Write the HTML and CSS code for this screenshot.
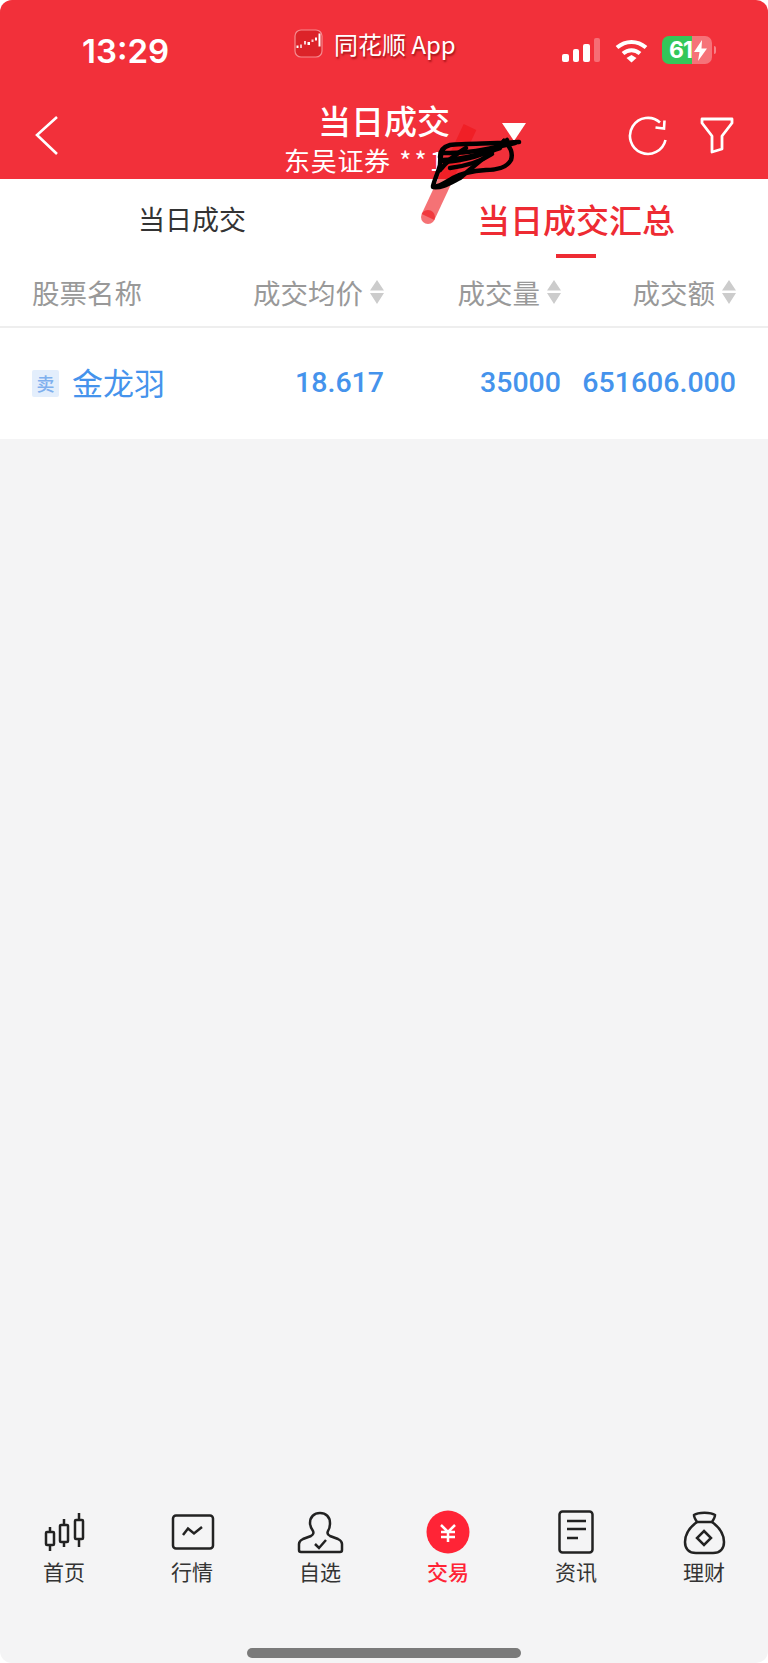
FILE: index.html
```html
<!DOCTYPE html>
<html lang="zh-CN">
<head>
  <meta charset="UTF-8" />
  <meta name="viewport" content="width=device-width, initial-scale=1.0" />
  <title>当日成交</title>
  <link rel="stylesheet" href="styles.css">
</head>
<body>
  <div class="screen">

    <!-- Red header -->
    <header class="top">
      <div class="status">
        <div class="time">13:29</div>
        <div class="app-label">
          <svg class="app-logo" viewBox="0 0 29 29">
            <rect x="1" y="1" width="27" height="27" rx="6" fill="#dc2329" stroke="#f58a8e" stroke-width="1.2"/>
            <g fill="#fff">
              <rect x="2.5" y="16.5" width="2" height="2.5"/>
              <rect x="6" y="15.5" width="2" height="3.5" opacity=".7"/>
              <rect x="10" y="12" width="2" height="3.5" opacity=".8"/>
              <rect x="13.5" y="13" width="2.5" height="3"/>
              <rect x="17.5" y="10.5" width="2" height="2.5" opacity=".8"/>
              <rect x="21" y="8.5" width="2" height="3"/>
              <rect x="24.5" y="4.5" width="2" height="13"/>
            </g>
          </svg>
          <span>同花顺 App</span>
        </div>
        <div class="indicators">
          <div class="signal">
            <i class="bar1"></i><i class="bar2"></i><i class="bar3"></i><i class="bar4"></i>
          </div>
          <svg class="wifi" viewBox="0 0 33 25" fill="none" stroke="#fff" stroke-width="4">
            <path d="M2 9.5C10.500 2 22.500 2 31 9.500"/>
            <path d="M8 15.500C13 11 20 11 25 15.500"/>
            <path d="M11.500 20L16.500 17L21.500 20L16.500 24.500Z" fill="#fff" stroke="none"/>
          </svg>
          <div class="battery">
            <span>61</span>
            <svg class="bolt" viewBox="0 0 13 21"><path d="M8 0L0 12H5.500L4 21L13 8.500H7.500Z" fill="#fff"/></svg>
          </div>
        </div>
      </div>

      <div class="nav">
        <svg class="back" viewBox="0 0 24 40" fill="none" stroke="#fff" stroke-width="2.6">
          <path d="M22 2L2 20L22 39"/>
        </svg>
        <div class="nav-title">
          <div class="title">当日成交</div>
          <div class="account">东吴证券 <em>**</em>1</div>
        </div>
        <div class="nav-actions">
          <svg class="refresh" viewBox="0 0 40 40" fill="none" stroke="#fff" stroke-width="2.6">
            <path d="M32 6.500A18 18 0 1 0 37.500 24"/>
            <path d="M36.500 4.500L36 12.500L27.500 11.500"/>
          </svg>
          <svg class="filter" viewBox="0 0 34 38" fill="none" stroke="#fff" stroke-width="2.8" stroke-linejoin="round">
            <path d="M2 3H32V7L22 20V33L12 36V20L2 7Z"/>
          </svg>
        </div>
      </div>
    </header>

    <!-- Tabs -->
    <div class="tabs">
      <div class="tab">当日成交</div>
      <div class="tab active">当日成交汇总</div>
    </div>

    <!-- Table -->
    <div class="table-head">
      <div class="th-name">股票名称</div>
      <div class="th">成交均价<svg class="sort" viewBox="0 0 14 24"><path d="M7 0L14 10.500H0ZM0 13H14L7 24Z"/></svg></div>
      <div class="th">成交量<svg class="sort" viewBox="0 0 14 24"><path d="M7 0L14 10.500H0ZM0 13H14L7 24Z"/></svg></div>
      <div class="th">成交额<svg class="sort" viewBox="0 0 14 24"><path d="M7 0L14 10.500H0ZM0 13H14L7 24Z"/></svg></div>
    </div>
    <div class="table-row">
      <div class="stock"><span class="badge">卖</span>金龙羽</div>
      <div class="num">18.617</div>
      <div class="num">35000</div>
      <div class="num">651606.000</div>
    </div>

    <div class="empty"></div>

    <!-- Bottom tab bar -->
    <nav class="tabbar">
      <div class="tabitem">
        <svg viewBox="0 0 56 46" fill="none" stroke="#222" stroke-width="2.5">
          <path d="M14 17V22M14 35V41M28 9V15M28 32V37M43 3V10M43 29V37"/>
          <rect x="10" y="22" width="8" height="13" rx="1"/>
          <rect x="24" y="15" width="8" height="17" rx="1"/>
          <rect x="39" y="10" width="8" height="19" rx="1"/>
        </svg>
        <span>首页</span>
      </div>
      <div class="tabitem">
        <svg viewBox="0 0 56 46" fill="none" stroke="#222" stroke-width="2.5">
          <rect x="9" y="5.500" width="40" height="33" rx="3"/>
          <path d="M19 25L24 18.500L30 23.500L38 17"/>
        </svg>
        <span>行情</span>
      </div>
      <div class="tabitem">
        <svg viewBox="0 0 56 46" fill="none" stroke="#222" stroke-width="2.5">
          <path d="M9 42H48a2 2 0 0 0 2-2V34C50 31 48 30 46 29L38 26C36 25 35 23 36 21C38 18 38 16 38 13C38 7 34 3 28 3C22 3 18 7 18 13C18 16 19 18 21 21C22 23 21 25 19 26L11 29C9 30 7 31 7 34V40a2 2 0 0 0 2 2Z"/>
          <path d="M23 34L27 38L34 30"/>
        </svg>
        <span>自选</span>
      </div>
      <div class="tabitem current">
        <svg viewBox="0 0 56 46" fill="none" stroke="#fff" stroke-width="2.500">
          <circle cx="28" cy="22" r="21.500" fill="#ff2436" stroke="none"/>
          <path d="M21 15L28 22L35 15M21 22H35M21 27H35M28 22V32"/>
        </svg>
        <span>交易</span>
      </div>
      <div class="tabitem">
        <svg viewBox="0 0 56 46" fill="none" stroke="#222" stroke-width="2.5">
          <rect x="11.500" y="1.500" width="33" height="41" rx="3"/>
          <path d="M19 11H38M19 19H38M19 28H30"/>
        </svg>
        <span>资讯</span>
      </div>
      <div class="tabitem">
        <svg viewBox="0 0 56 46" fill="none" stroke="#222" stroke-width="2.5">
          <path d="M21 12C14 17 9 24 9 32C9 39 13 43 20 43H37C44 43 48 39 48 32C48 24 43 17 36 12"/>
          <path d="M21 12C19 9 18 7 18 5C22 2 35 2 39 5C39 7 38 9 36 12Z"/>
          <path d="M28 21L35 28L28 35L21 28Z"/>
        </svg>
        <span>理财</span>
      </div>
    </nav>
    <div class="home-bar"><div class="home-indicator"></div></div>

    <!-- Marker and pen scribble on top of the screenshot -->
    <svg class="scribble" viewBox="0 0 120 120" fill="none">
      <path d="M50 17L8 107" stroke="#ee1419" stroke-opacity=".6" stroke-width="14"/>
      <circle cx="8" cy="107" r="7" fill="#ee1419" fill-opacity=".6"/>
      <g stroke="#000" stroke-width="4.500" stroke-linecap="round" stroke-linejoin="round">
        <path d="M99 32C75 34 45 33 30 35C23 37 20 42 20 47C20 53 27 52 40 50C60 47 78 38 84 31"/>
        <path d="M84 31C91 36 93 44 91 50C87 57 78 60 66 60C52 61 40 64 33 68C26 72 20 77 13 77C22 78 28 74 40 68C52 58 70 42 87 30"/>
        <path d="M13 76C15 68 18 63 20 55C20 50 21 44 23 40"/>
        <path d="M24 43C50 44 72 38 95 33"/>
        <path d="M22 50C42 50 62 44 80 38"/>
        <path d="M30 58C45 56 60 52 72 44"/>
        <path d="M20 60C28 50 36 44 46 38"/>
      </g>
    </svg>
  </div>
</body>
</html>
```

FILE: styles.css
```css
* { margin: 0; padding: 0; box-sizing: border-box; }
html, body {
  height: 100%;
  background: #fff;
  font-family: "Noto Sans CJK SC", sans-serif;
}
.screen {
  position: relative;
  height: 100vh;
  display: flex;
  flex-direction: column;
  background: #f4f4f5;
  border-radius: 12px;
  overflow: hidden;
}

/* header */
.top {
  height: 179px;
  background: #f2303a;
  color: #fff;
}
.status {
  height: 100px;
  display: grid;
  grid-template-columns: 294px auto 1fr;
  align-items: center;
}
.time {
  padding: 0 0 0 82px;
  margin-top: 2px;
  font-family: Inter, sans-serif;
  font-size: 33px;
  font-weight: 600;
}
.app-label {
  display: flex;
  align-items: center;
  gap: 11px;
  font-size: 24px;
  margin-top: -14px;
  text-shadow: 1px 2px 2px rgba(110, 0, 0, 0.6);
}
.app-logo { width: 29px; height: 29px; }
.indicators {
  display: flex;
  justify-content: flex-end;
  align-items: center;
  padding-right: 56px;
}
.signal {
  display: flex;
  align-items: flex-end;
  gap: 4px;
  height: 24px;
  margin-right: 15px;
}
.signal i { display: block; width: 6.500px; background: #fff; border-radius: 2px; }
.bar1 { height: 8px; }
.bar2 { height: 13px; }
.bar3 { height: 18px; }
.signal .bar4 { height: 24px; background: rgba(255, 255, 255, 0.3); }
.wifi { width: 33px; height: 25px; margin-right: 14px; }
.battery {
  position: relative;
  width: 50px;
  height: 28px;
  display: flex;
  align-items: center;
  padding-left: 7px;
  border-radius: 7px;
  background: linear-gradient(to right, #34c759 60%, rgba(255, 255, 255, 0.32) 60%);
  font-family: Inter, sans-serif;
  font-size: 23px;
  font-weight: 700;
}
.battery span { width: 25px; letter-spacing: -1px; }
.battery::after {
  content: "";
  position: absolute;
  right: -4px;
  top: 10px;
  width: 2px;
  height: 8px;
  border-radius: 0 2px 2px 0;
  background: rgba(255, 255, 255, 0.4);
}
.bolt { width: 13px; height: 21px; }

.nav {
  height: 79px;
  display: grid;
  grid-template-columns: 1fr auto 1fr;
}
.back { width: 24px; height: 40px; margin: 15px 0 0 35px; }
.nav-title { display: flex; flex-direction: column; align-items: center; }
.title { font-size: 33px; font-weight: 500; line-height: 36px; margin-top: 2px; }
.account {
  width: 200px;
  height: 32px;
  font-size: 26px;
  letter-spacing: 0.7px;
  line-height: 32px;
  margin-top: 6px;
  white-space: nowrap;
}
.account em { font-style: normal; letter-spacing: 3px; margin-left: 2px; }
.nav-actions {
  position: relative;
  display: flex;
  justify-content: flex-end;
  gap: 32px;
  padding: 16px 34px 0 0;
}
.nav-actions::before {
  content: "";
  position: absolute;
  left: 18px;
  top: 23px;
  border-left: 12px solid transparent;
  border-right: 12px solid transparent;
  border-top: 18px solid #fff;
}
.refresh { width: 40px; height: 40px; }
.filter { width: 34px; height: 38px; }

/* tabs */
.tabs {
  height: 81px;
  display: grid;
  grid-template-columns: 1fr 1fr;
  background: #fff;
}
.tab {
  position: relative;
  text-align: center;
  font-size: 27px;
  line-height: 80px;
  color: #333;
}
.tab.active {
  font-size: 33px;
  font-weight: 500;
  color: #ee2b33;
}
.tab.active::after {
  content: "";
  position: absolute;
  left: 172px;
  top: 75px;
  width: 40px;
  height: 4px;
  background: #ee2b33;
}

/* table */
.table-head, .table-row {
  display: grid;
  grid-template-columns: 1fr 170px 177px 175px;
  align-items: center;
  padding: 0 32px;
  background: #fff;
}
.table-head {
  height: 68px;
  padding-bottom: 3px;
  border-bottom: 2px solid #eeeeee;
  font-size: 27.500px;
  color: #999;
}
.th {
  display: flex;
  justify-content: flex-end;
  align-items: center;
  gap: 7px;
}
.sort { width: 14px; height: 24px; fill: #cccccc; }
.table-row { height: 111px; }
.stock {
  display: flex;
  align-items: center;
  font-size: 31px;
  line-height: 40px;
  padding-bottom: 4px;
  color: #4593ec;
}
.badge {
  width: 27px;
  height: 27px;
  margin-top: 3px;
  margin-right: 13px;
  border-radius: 2px;
  background: #e3eefc;
  color: #7fb0ee;
  font-size: 18px;
  font-weight: 500;
  line-height: 27px;
  text-align: center;
}
.num {
  text-align: right;
  padding-bottom: 2px;
  font-family: Roboto, sans-serif;
  font-size: 28.500px;
  font-weight: 500;
  color: #4593ec;
}
.empty { flex: 1; }

/* bottom bar */
.tabbar {
  display: grid;
  grid-template-columns: repeat(6, 1fr);
}
.tabitem {
  display: flex;
  flex-direction: column;
  align-items: center;
  font-size: 21px;
  line-height: 28px;
  color: #333;
}
.tabitem svg { width: 56px; height: 46px; margin-bottom: 1px; }
.tabitem.current { color: #ff2436; font-weight: 500; }
.home-bar {
  height: 78px;
  display: flex;
  justify-content: center;
  padding-top: 63px;
}
.home-indicator {
  width: 274px;
  height: 10px;
  border-radius: 5px;
  background: #7a7a7a;
}

.scribble {
  position: absolute;
  left: 420px;
  top: 110px;
  width: 120px;
  height: 120px;
}
```
